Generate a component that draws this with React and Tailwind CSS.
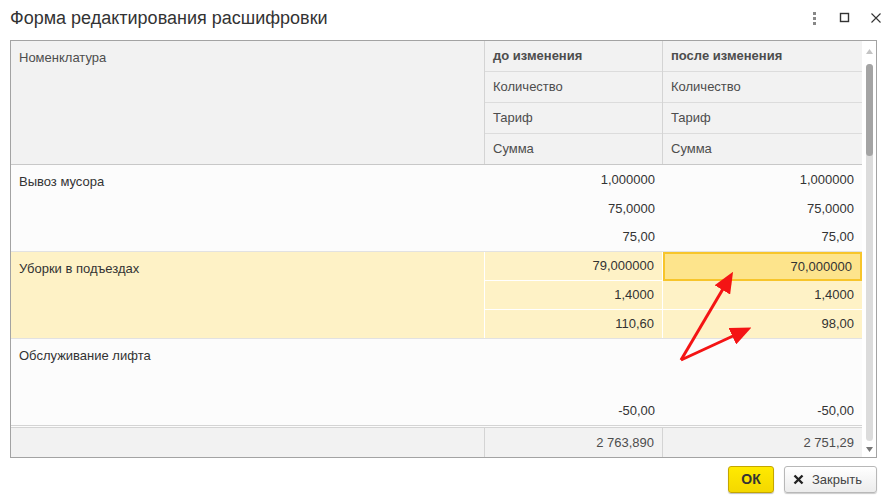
import React from 'react';

// строки расшифровки
const rows = [
  { name: 'Вывоз мусора', before: ['1,000000', '75,0000', '75,00'], after: ['1,000000', '75,0000', '75,00'] },
  { name: 'Уборки в подъездах', before: ['79,000000', '1,4000', '110,60'], after: ['70,000000', '1,4000', '98,00'], active: true },
  { name: 'Обслуживание лифта', before: ['', '', '-50,00'], after: ['', '', '-50,00'] },
];

const font = { fontFamily: '"Liberation Sans", Arial, sans-serif' };

const HeaderCell = ({ children, bold, last }) => (
  <div
    className={`flex items-center px-2 text-[13px] text-[#4d4d4d] ${bold ? 'font-bold' : ''} ${last ? 'h-[30px]' : 'h-[31px] border-b border-[#dcdcdc]'}`}
  >
    {children}
  </div>
);

const ValueCell = ({ value, active, selected, last }) => {
  let cls = 'flex items-center justify-end pr-2 text-[13px] text-[#333]';
  cls += last ? ' h-[28px]' : ' h-[29px]';
  if (selected) cls += ' bg-[#fde48c] border-2 border-[#f7c52b]';
  else if (active && !last) cls += ' border-b border-white';
  return <div className={cls}>{value}</div>;
};

export default function App() {
  return (
    <div className="w-[887px] h-[495px] bg-white relative overflow-hidden" style={font}>
      {/* Заголовок */}
      <div className="h-[35px] flex items-center justify-between pl-[10px] pr-[5px]">
        <h1 className="text-[18px] text-[#333] leading-none">Форма редактирования расшифровки</h1>
        <div className="flex items-center gap-[19px] text-[#555]">
          <svg width="12" height="14" viewBox="0 0 12 14">
            <rect x="5" y="1" width="3" height="3" fill="#888" />
            <rect x="5" y="6" width="3" height="3" fill="#888" />
            <rect x="5" y="11" width="3" height="3" fill="#888" />
          </svg>
          <svg width="12" height="12" viewBox="0 0 12 12">
            <rect x="1.5" y="1.5" width="8" height="8" fill="none" stroke="#333" strokeWidth="1.4" />
          </svg>
          <svg width="12" height="12" viewBox="0 0 12 12">
            <path d="M1.5 1.5 L10.5 10.5 M10.5 1.5 L1.5 10.5" stroke="#333" strokeWidth="1.1" />
          </svg>
        </div>
      </div>

      {/* Таблица */}
      <div className="ml-[10px] mt-[5px] w-[867px] h-[418px] border border-[#a3a3a3] flex">
        <div className="flex-1 flex flex-col">
          {/* Шапка */}
          <div className="grid grid-cols-[474px_178px_1fr] bg-[#f2f2f2] border-b border-[#c8c8c8]">
            <div className="border-r border-[#d4d4d4] px-2 pt-[7px] text-[13px] text-[#4d4d4d]">Номенклатура</div>
            <div className="border-r border-[#d4d4d4]">
              <HeaderCell bold>до изменения</HeaderCell>
              <HeaderCell>Количество</HeaderCell>
              <HeaderCell>Тариф</HeaderCell>
              <HeaderCell last>Сумма</HeaderCell>
            </div>
            <div>
              <HeaderCell bold>после изменения</HeaderCell>
              <HeaderCell>Количество</HeaderCell>
              <HeaderCell>Тариф</HeaderCell>
              <HeaderCell last>Сумма</HeaderCell>
            </div>
          </div>

          {/* Строки */}
          {rows.map((row, i) => (
            <div
              key={i}
              className={`grid grid-cols-[474px_178px_1fr] ${row.active ? 'bg-[#fef2c6]' : 'bg-[#fcfcfc]'} ${i === rows.length - 1 ? 'border-b-[3px] border-double border-[#d4d4d4]' : 'border-b border-[#e2e2e2]'}`}
            >
              <div className={`px-2 pt-[7px] text-[13px] text-[#333] h-[86px] ${row.active ? 'border-r border-white' : ''}`}>
                {row.name}
              </div>
              <div className={row.active ? 'border-r border-white' : ''}>
                {row.before.map((v, j) => (
                  <ValueCell key={j} value={v} active={row.active} last={j === 2} />
                ))}
              </div>
              <div>
                {row.after.map((v, j) => (
                  <ValueCell key={j} value={v} active={row.active} selected={row.active && j === 0} last={j === 2} />
                ))}
              </div>
            </div>
          ))}

          {/* Итоги */}
          <div className="grid grid-cols-[474px_178px_1fr] bg-[#f2f2f2] flex-1">
            <div className="border-r border-[#d4d4d4]" />
            <div className="border-r border-[#d4d4d4] flex items-center justify-end pr-2 text-[13px] text-[#4d4d4d]">2 763,890</div>
            <div className="flex items-center justify-end pr-2 text-[13px] text-[#4d4d4d]">2 751,29</div>
          </div>
        </div>

        {/* Полоса прокрутки */}
        <div className="w-[14px] bg-white flex flex-col items-center pt-[8px] pb-[5px]">
          <svg width="7" height="5" viewBox="0 0 7 5"><path d="M0 5 L3.5 0 L7 5 Z" fill="#c4c4c4" /></svg>
          <div className="mt-[10px] w-[7px] flex-1 rounded-full bg-[#dcdcdc] flex flex-col">
            <div className="h-[92px] rounded-full bg-[#a4a4a4]" />
          </div>
          <svg className="mt-[6px]" width="7" height="5" viewBox="0 0 7 5"><path d="M0 0 L7 0 L3.5 5 Z" fill="#777" /></svg>
        </div>
      </div>

      {/* Кнопки */}
      <div className="flex justify-end gap-[10px] pr-[10px] mt-[8px]">
        <button className="w-[46px] h-[27px] rounded-[3px] border border-[#c4a600] bg-gradient-to-b from-[#ffea00] to-[#f4d800] text-[14px] font-bold text-[#333] shadow-[0_1px_1px_rgba(0,0,0,0.25)]">
          ОК
        </button>
        <button className="w-[93px] h-[27px] rounded-[3px] border border-[#b8b8b8] bg-gradient-to-b from-white to-[#ececec] text-[13px] text-[#444] flex items-center gap-[8px] pl-[8px] shadow-[0_1px_1px_rgba(0,0,0,0.2)]">
          <svg width="11" height="11" viewBox="0 0 11 11">
            <path d="M1.5 1.5 L9.5 9.5 M9.5 1.5 L1.5 9.5" stroke="#222" strokeWidth="2.4" />
          </svg>
          Закрыть
        </button>
      </div>

      {/* Стрелки-пометки */}
      <svg className="absolute left-0 top-0 pointer-events-none" width="887" height="495">
        <defs>
          <marker id="head" markerWidth="7" markerHeight="6" refX="5" refY="3" orient="auto" markerUnits="strokeWidth">
            <path d="M0 0 L7 3 L0 6 Z" fill="#f41414" />
          </marker>
        </defs>
        <line x1="681" y1="360" x2="730" y2="277" stroke="#f41414" strokeWidth="3" markerEnd="url(#head)" />
        <line x1="681" y1="360" x2="746" y2="330" stroke="#f41414" strokeWidth="3" markerEnd="url(#head)" />
      </svg>
    </div>
  );
}
